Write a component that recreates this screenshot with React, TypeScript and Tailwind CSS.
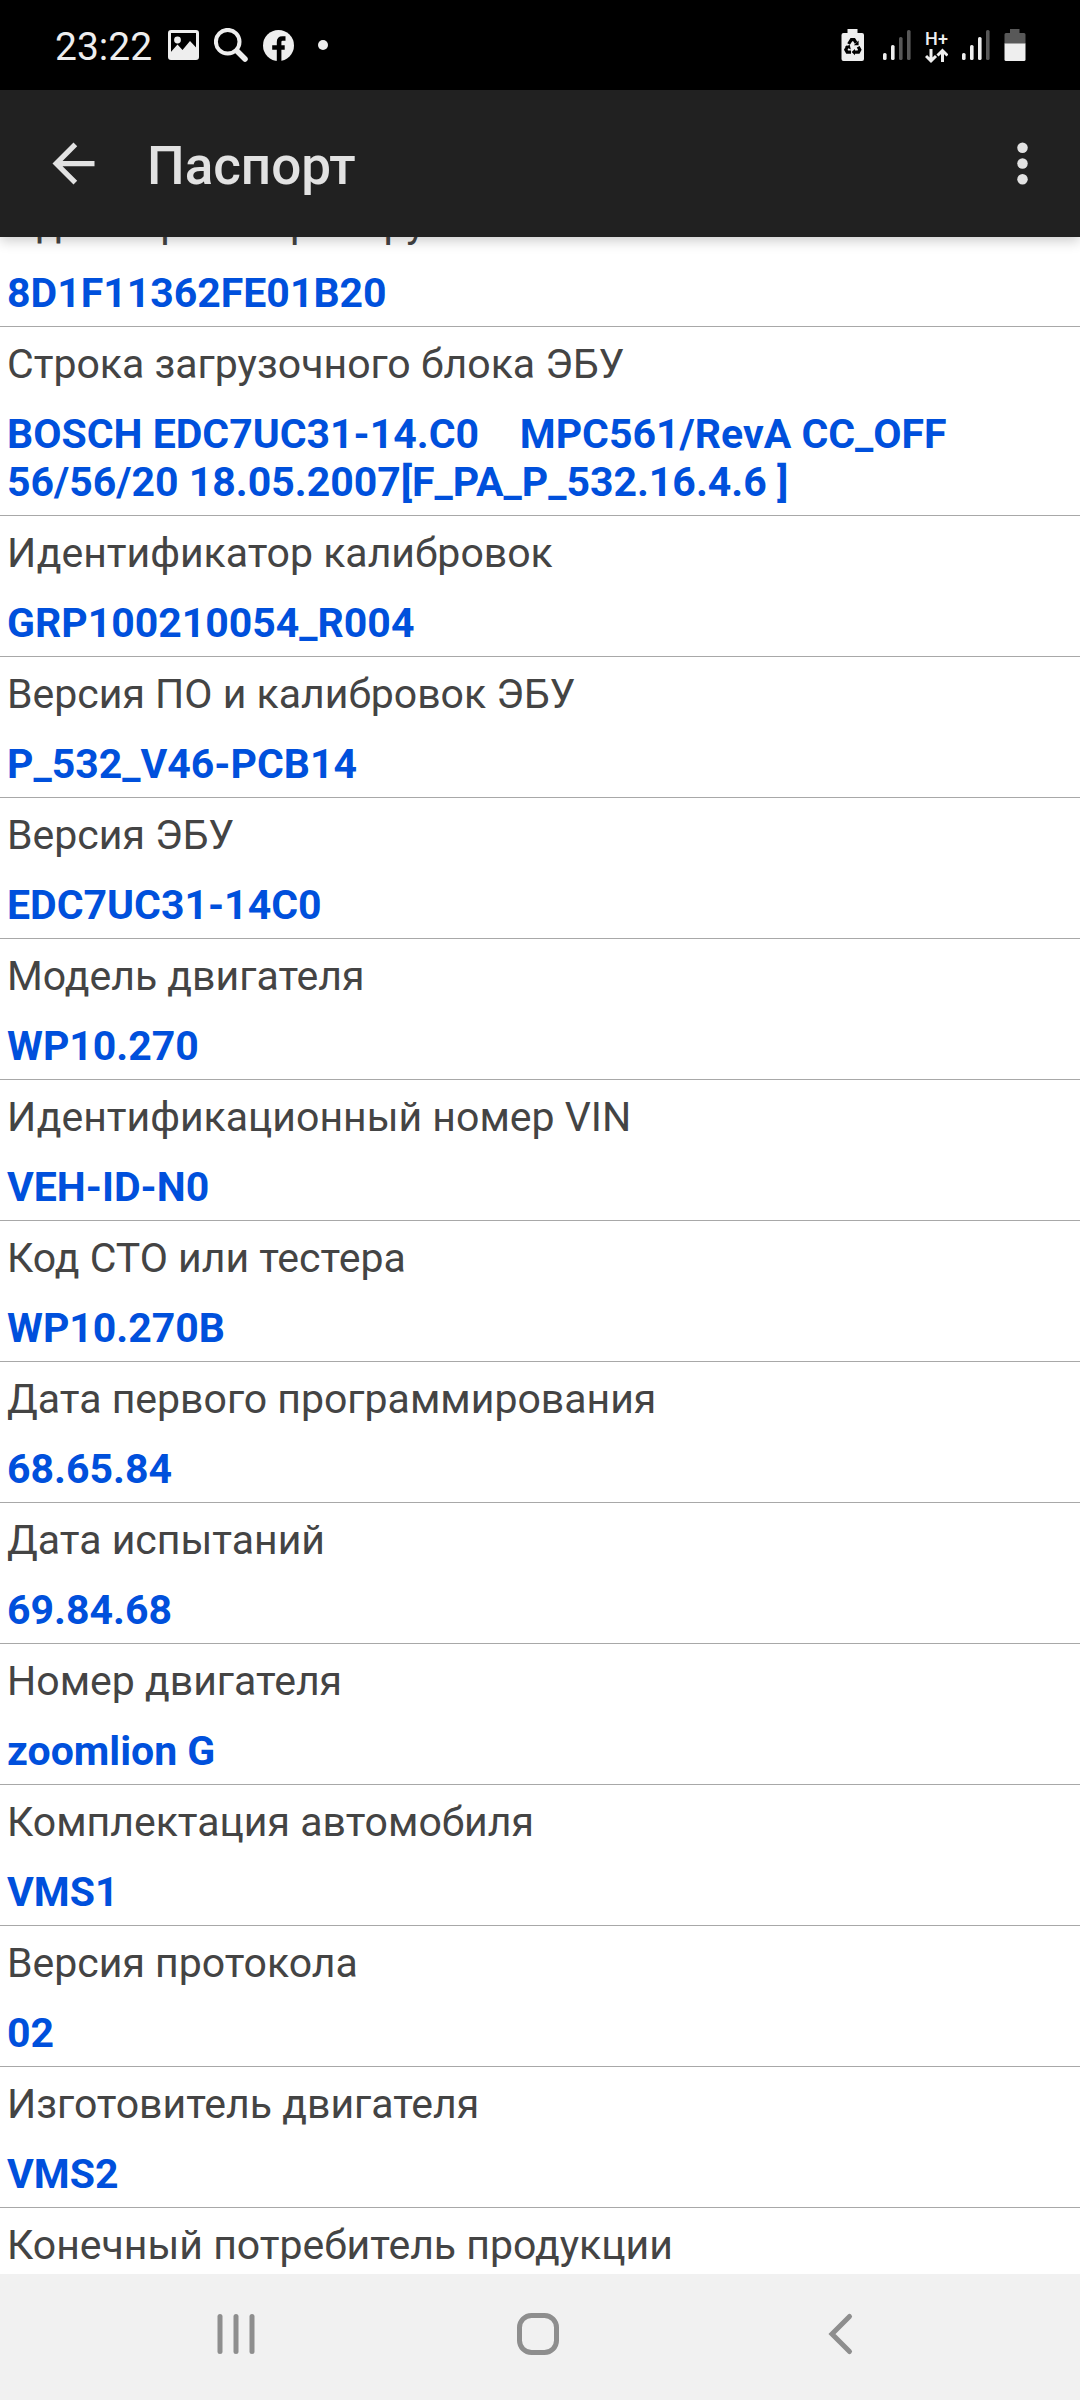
import { clsx } from 'clsx'

const passport = [
  { label: 'Идентификатор загрузочного блока ЭБУ', value: '8D1F11362FE01B20' },
  {
    label: 'Строка загрузочного блока ЭБУ',
    value: 'BOSCH EDC7UC31-14.C0    MPC561/RevA CC_OFF 56/56/20 18.05.2007[F_PA_P_532.16.4.6 ]',
  },
  { label: 'Идентификатор калибровок', value: 'GRP100210054_R004' },
  { label: 'Версия ПО и калибровок ЭБУ', value: 'P_532_V46-PCB14' },
  { label: 'Версия ЭБУ', value: 'EDC7UC31-14C0' },
  { label: 'Модель двигателя', value: 'WP10.270' },
  { label: 'Идентификационный номер VIN', value: 'VEH-ID-N0' },
  { label: 'Код СТО или тестера', value: 'WP10.270B' },
  { label: 'Дата первого программирования', value: '68.65.84' },
  { label: 'Дата испытаний', value: '69.84.68' },
  { label: 'Номер двигателя', value: 'zoomlion G' },
  { label: 'Комплектация автомобиля', value: 'VMS1' },
  { label: 'Версия протокола', value: '02' },
  { label: 'Изготовитель двигателя', value: 'VMS2' },
  { label: 'Конечный потребитель продукции', value: '' },
]

const signalBars = [
  { x: 0, y: 24 },
  { x: 8, y: 16 },
  { x: 16, y: 8 },
  { x: 24, y: 1 },
]

function Signal({ level }: { level: number }) {
  return (
    <svg width="28" height="34" viewBox="0 0 28 34" aria-hidden="true">
      {signalBars.map(({ x, y }, i) => (
        <rect
          key={x}
          x={x}
          y={y + 1}
          width="3.6"
          height={31 - y}
          rx="1.6"
          className={clsx(i < level ? 'fill-[#eeeeee]' : 'fill-[#585858]')}
        />
      ))}
    </svg>
  )
}

function StatusBar() {
  return (
    <div className="flex h-[90px] shrink-0 items-center justify-between bg-black pl-[55px] pr-[54px] text-[#eeeeee]">
      <div className="flex items-center gap-[15px]">
        <span className="pt-[3px] text-[39px] leading-[48px]">23:22</span>

        {/* Gallery */}
        <svg width="32" height="34" viewBox="0 0 32 34" aria-hidden="true">
          <rect x="2.5" y="3.5" width="28" height="27" rx="1.5" fill="none" stroke="currentColor" strokeWidth="3" />
          <circle cx="10.5" cy="12" r="3.4" fill="currentColor" />
          <path d="M3 25l7.5-8.5 5 5.5 7.5-9 7 7.5V31H3z" fill="currentColor" />
        </svg>

        {/* Search */}
        <svg width="34" height="34" viewBox="0 0 34 34" fill="none" stroke="currentColor" aria-hidden="true">
          <circle cx="13.7" cy="13.7" r="11.8" strokeWidth="4" />
          <path d="M23 23l8 8" strokeWidth="5.5" strokeLinecap="round" />
        </svg>

        {/* Facebook */}
        <svg width="32" height="34" viewBox="0 0 32 34" aria-hidden="true">
          <circle cx="15.5" cy="17.5" r="15.5" fill="currentColor" />
          <path d="M22.500 10.500h-3c-2.200 0-3.400 1.200-3.400 3.400V34M9.200 19.500h12.500" fill="none" stroke="#000" strokeWidth="4.6" />
        </svg>

        <span className="ml-2 h-[10px] w-[10px] rounded-full bg-[#eeeeee]" />
      </div>

      <div className="flex items-center gap-[14px]">
        {/* Power saving battery */}
        <svg width="28" height="34" viewBox="0 0 28 34" aria-hidden="true">
          <path d="M6.5 1h10v4H21a2 2 0 0 1 2 2v24a2 2 0 0 1-2 2H2.5a2 2 0 0 1-2-2V7a2 2 0 0 1 2-2h4z" fill="currentColor" />
          <g fill="none" stroke="#000" strokeWidth="3.2">
            <path d="M7.600 16l2.800-4.300h2.700l2 3.200" />
            <path d="M17.200 18.800l1.600 2.900-1.300 2.500h-4" />
            <path d="M10 24.200H6.200l-1.400-2.500 1.900-3.300" />
          </g>
          <path d="M17.600 12.400v4.800h-4.800zM14 20.900v6.400l-3.400-3.200zM4 18.200l4.800-1.300 1 4.600z" fill="#000" />
        </svg>

        <Signal level={2} />

        {/* Mobile data type */}
        <div className="flex w-[23px] flex-col items-center pt-1">
          <span className="text-[18px] font-medium leading-[18px]">H+</span>
          <svg width="23" height="16" viewBox="0 0 23 16" fill="none" stroke="currentColor" strokeWidth="3" aria-hidden="true">
            <path d="M6 1v12M1 8l5 5 5-5M17.500 14V2M12.500 7.500l5-5 5 5" />
          </svg>
        </div>

        <Signal level={3} />

        {/* Battery */}
        <svg width="22" height="34" viewBox="0 0 22 34" aria-hidden="true">
          <path d="M6 1h9.500v4H20a1.500 1.500 0 0 1 1.500 1.500V16H.5V6.500A1.500 1.500 0 0 1 2 5h4z" fill="#585858" />
          <path d="M.5 15.500h21v16A1.500 1.500 0 0 1 20 33H2a1.500 1.500 0 0 1-1.500-1.500z" fill="currentColor" />
        </svg>
      </div>
    </div>
  )
}

function AppBar() {
  return (
    <header className="relative z-10 flex h-[147px] shrink-0 items-center bg-[#212121] pl-[42px] pr-[26px] text-[#e2e2e2] shadow-[0_4px_12px_rgba(0,0,0,0.2)]">
      <button type="button" aria-label="Назад">
        <svg width="63" height="63" viewBox="0 0 24 24" fill="currentColor">
          <path d="M20 11H7.830l5.590-5.590L12 4l-8 8 8 8 1.410-1.410L7.830 13H20v-2z" />
        </svg>
      </button>
      <h1 className="ml-[42px] flex-1 pt-1 text-[53px] font-medium leading-[62px]">Паспорт</h1>
      <button type="button" aria-label="Меню">
        <svg width="63" height="63" viewBox="0 0 24 24" fill="currentColor">
          <circle cx="12" cy="6" r="2" />
          <circle cx="12" cy="12" r="2" />
          <circle cx="12" cy="18" r="2" />
        </svg>
      </button>
    </header>
  )
}

function NavBar() {
  return (
    <nav className="flex h-[126px] shrink-0 items-center justify-between bg-[#f1f1f1] pl-[206px] pr-[210px] text-[#8e8e8e]">
      <button type="button" aria-label="Недавние">
        <svg width="60" height="60" viewBox="0 0 60 60" fill="currentColor">
          <rect x="11.5" y="7" width="5" height="40" rx="2.5" />
          <rect x="27.5" y="7" width="5" height="40" rx="2.5" />
          <rect x="43.5" y="7" width="5" height="40" rx="2.5" />
        </svg>
      </button>
      <button type="button" aria-label="Домой">
        <svg width="60" height="60" viewBox="0 0 60 60" fill="none" stroke="currentColor" strokeWidth="5">
          <rect x="11.5" y="8.5" width="37" height="37" rx="12" />
        </svg>
      </button>
      <button type="button" aria-label="Назад">
        <svg width="60" height="60" viewBox="0 0 60 60" fill="none" stroke="currentColor" strokeWidth="5" strokeLinecap="round">
          <path d="M39.500 9.500L22 27l17.500 17.500" />
        </svg>
      </button>
    </nav>
  )
}

export default function App() {
  return (
    <div className="flex h-screen flex-col bg-white font-[Roboto,sans-serif]">
      <StatusBar />
      <AppBar />

      <main className="min-h-0 flex-1 overflow-hidden">
        {/* List is scrolled partly under the app bar */}
        <dl className="-mt-[51px] text-[41px] leading-[48px]">
          {passport.map(({ label, value }) => (
            <div key={label} className="border-b border-[#a8a8a8] px-[7px] pb-[9px] pt-[13px]">
              <dt className="text-[#444444]">{label}</dt>
              <dd className="mt-[22px] whitespace-pre-wrap font-bold text-[#0050dc]">{value}</dd>
            </div>
          ))}
        </dl>
      </main>

      <NavBar />
    </div>
  )
}
